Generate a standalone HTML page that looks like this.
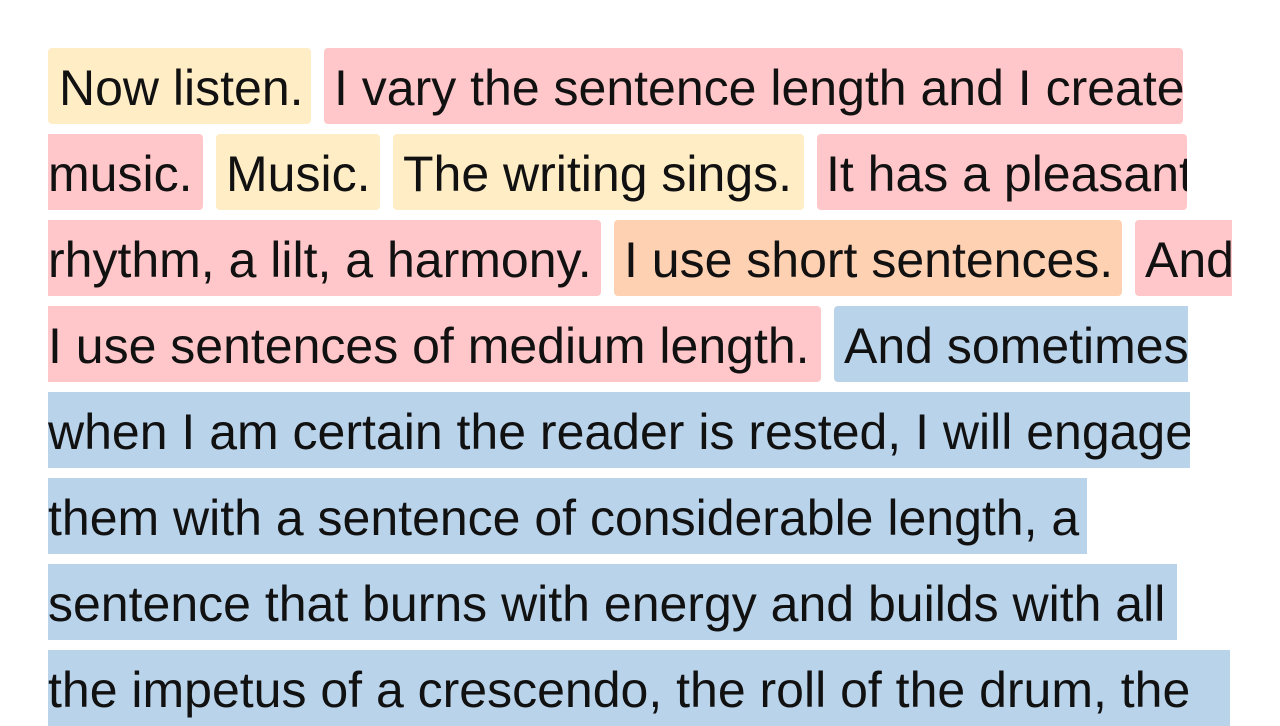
<!DOCTYPE html>
<html><head><meta charset="utf-8"><style>
html,body{margin:0;padding:0;background:#fff;width:1280px;height:672px;overflow:hidden}
.b{position:absolute;height:76px;font-family:"Liberation Sans",Arial,sans-serif;font-size:50px;line-height:80px;color:#111;white-space:nowrap;overflow:hidden;box-sizing:border-box;border-radius:4px}
.y{background:#ffedc6}.r{background:#ffc7c9}.o{background:#ffd1b3}.u{background:#b9d3eb}
</style></head><body>
<div class="b y" style="left:48px;top:48px;width:263px;padding-left:11px">Now listen.</div>
<div class="b r" style="left:324px;top:48px;width:859px;padding-left:10px">I vary the sentence length and I create</div>
<div class="b r" style="left:48px;top:134px;width:155px;border-radius:0 4px 4px 0">music.</div>
<div class="b y" style="left:216px;top:134px;width:164px;padding-left:10px">Music.</div>
<div class="b y" style="left:393px;top:134px;width:411px;padding-left:10px">The writing sings.</div>
<div class="b r" style="left:817px;top:134px;width:370px;padding-left:9px">It has a pleasant</div>
<div class="b r" style="left:48px;top:220px;width:553px;border-radius:0 4px 4px 0">rhythm, a lilt, a harmony.</div>
<div class="b o" style="left:614px;top:220px;width:508px;padding-left:10px">I use short sentences.</div>
<div class="b r" style="left:1135px;top:220px;width:97px;padding-left:10px;border-radius:4px 0 0 4px">And</div>
<div class="b r" style="left:48px;top:306px;width:773px;border-radius:0 4px 4px 0">I use sentences of medium length.</div>
<div class="b u" style="left:834px;top:306px;width:354px;padding-left:10px;border-radius:4px 0 0 4px">And sometimes</div>
<div class="b u" style="left:48px;top:392px;width:1142px;border-radius:0">when I am certain the reader is rested, I will engage</div>
<div class="b u" style="left:48px;top:478px;width:1039px;border-radius:0">them with a sentence of considerable length, a</div>
<div class="b u" style="left:48px;top:564px;width:1129px;border-radius:0">sentence that burns with energy and builds with all</div>
<div class="b u" style="left:48px;top:650px;width:1182px;border-radius:0">the impetus of a crescendo, the roll of the drum, the</div>
</body></html>
